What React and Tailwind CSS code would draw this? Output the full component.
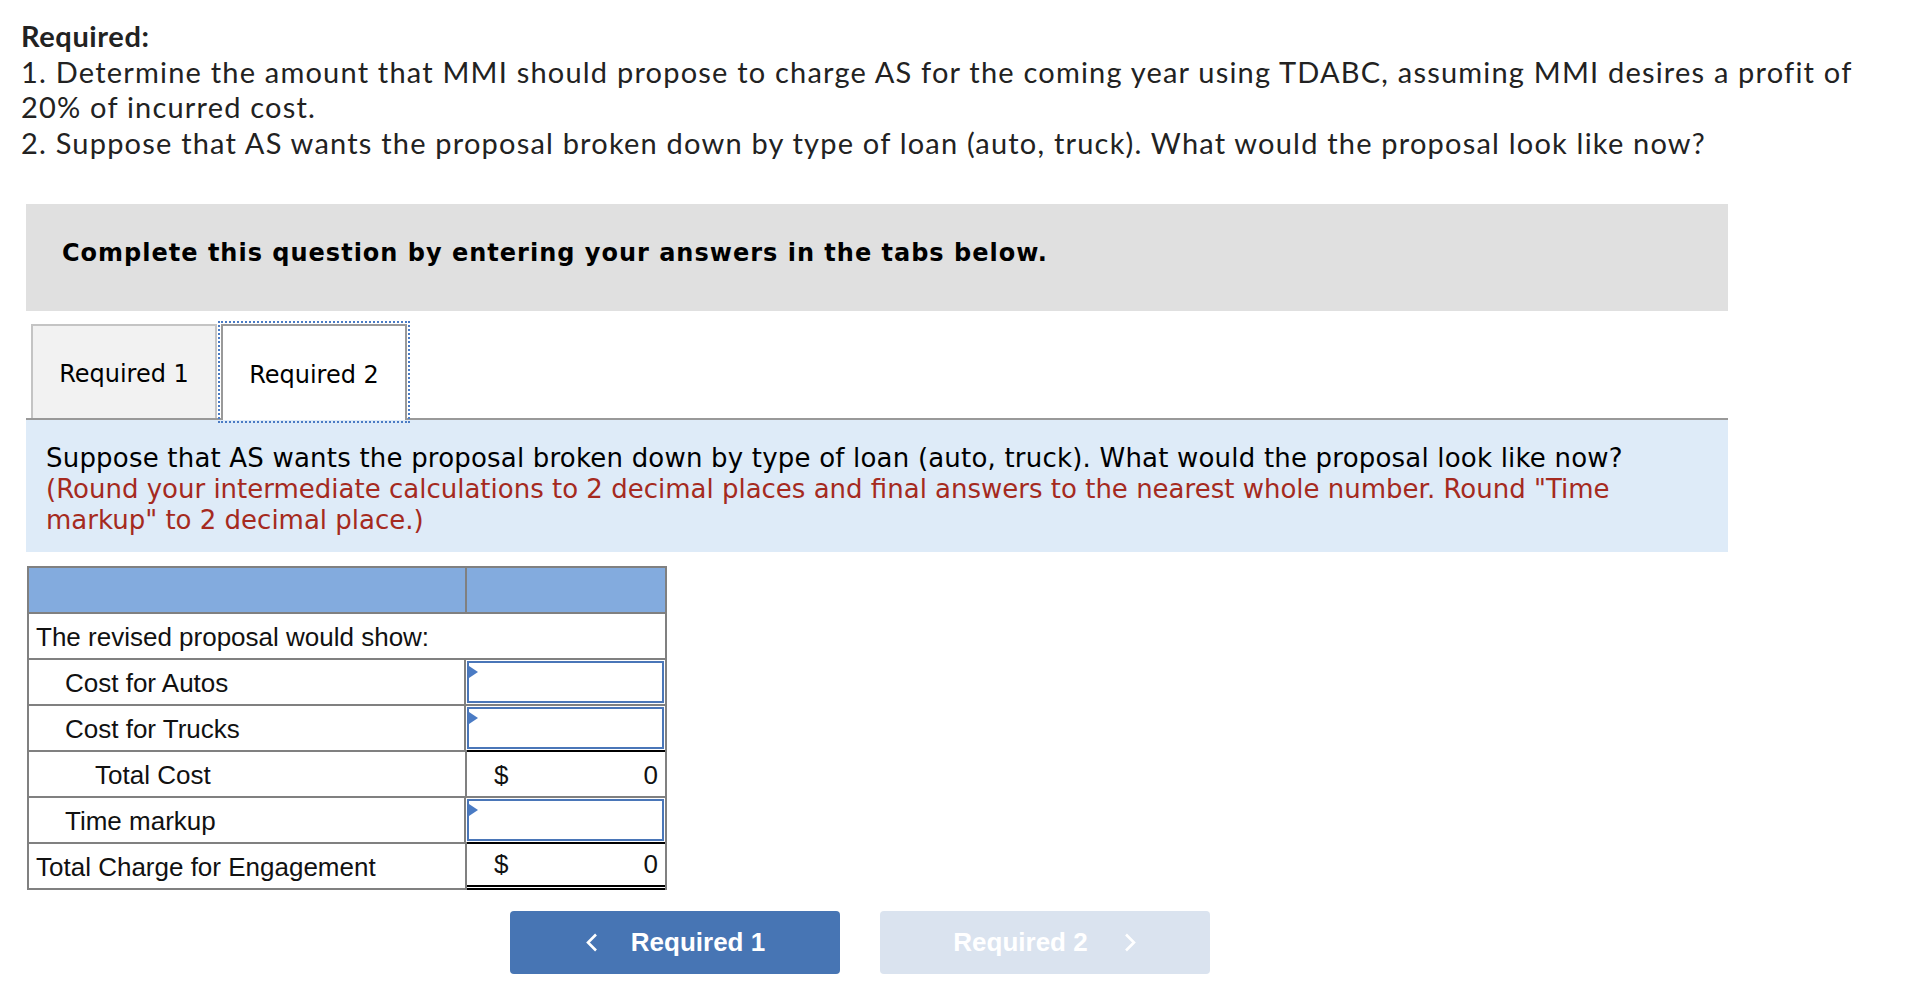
import React from "react";

function Tri() {
  return (
    <svg className="absolute left-0 top-[3px]" width="9" height="12" viewBox="0 0 9 12">
      <polygon points="0,0 9,6 0,12" fill="#4a7bc4" />
    </svg>
  );
}

function InputCell() {
  return (
    <div className="relative w-[200px] h-full p-px">
      <div className="relative w-full h-full border-2 border-[#4a76b8] bg-white">
        <Tri />
      </div>
    </div>
  );
}

function Chevron({ dir }) {
  return (
    <svg width="13" height="19" viewBox="0 0 13 19" fill="none">
      {dir === "left" ? (
        <polyline points="11,1.5 3,9.5 11,17.5" stroke="white" strokeWidth="2.6" />
      ) : (
        <polyline points="2,1.5 10,9.5 2,17.5" stroke="white" strokeWidth="2.6" />
      )}
    </svg>
  );
}

export default function App() {
  const arial = { fontFamily: '"Liberation Sans", Arial, sans-serif' };
  const verdana = { fontFamily: '"DejaVu Sans", Verdana, sans-serif' };
  return (
    <div className="w-[1918px] min-h-[998px] bg-white">
      {/* Intro text */}
      <div
        className="pl-[21px] pt-[18px] text-[29px] tracking-[1.2px] leading-[35.5px] text-[#222]"
        style={{ fontFamily: 'Lato, "Open Sans", sans-serif' }}
      >
        <div className="font-bold tracking-[0.6px]">Required:</div>
        <div className="whitespace-nowrap">
          1. Determine the amount that MMI should propose to charge AS for the coming year using TDABC, assuming MMI desires a profit of
        </div>
        <div>20% of incurred cost.</div>
        <div className="whitespace-nowrap">
          2. Suppose that AS wants the proposal broken down by type of loan (auto, truck). What would the proposal look like now?
        </div>
      </div>

      {/* Instruction box */}
      <div className="ml-[26px] mt-[44px] w-[1702px] h-[107px] bg-[#e0e0e0] pl-[36px] pt-[31px]" style={verdana}>
        <div className="text-[24px] tracking-[1px] font-bold text-black">
          Complete this question by entering your answers in the tabs below.
        </div>
      </div>

      {/* Tabs */}
      <div className="ml-[26px] mt-[15px] w-[1702px] h-[94px] border-b-2 border-[#999] flex items-end pl-[5px]" style={verdana}>
        <div className="h-[94px] w-[186px] bg-[#f2f2f2] border-2 border-b-0 border-[#c4c4c4] flex items-center justify-center pt-1 text-[24px] text-black">
          Required 1
        </div>
        <div className="ml-[4px] h-[96px] -mb-[2px] w-[186px] bg-white border-2 border-b-0 border-[#999] flex items-center justify-center pt-1 text-[24px] text-black outline-2 outline-dotted outline-[#4a7bc4] outline-offset-[1px]">
          Required 2
        </div>
      </div>

      {/* Question box */}
      <div className="ml-[26px] w-[1702px] h-[132px] bg-[#deebf8] pl-[20px] pt-[23px] text-[26px] leading-[31px]" style={verdana}>
        <div className="text-black whitespace-nowrap tracking-[0.2px]">
          Suppose that AS wants the proposal broken down by type of loan (auto, truck). What would the proposal look like now?
        </div>
        <div className="text-[#a52a20]">
          (Round your intermediate calculations to 2 decimal places and final answers to the nearest whole number. Round "Time
          <br />
          markup" to 2 decimal place.)
        </div>
      </div>

      {/* Table */}
      <div className="ml-[27px] mt-[14px] w-[640px] border-2 border-b-0 border-[#808080] text-[26px] text-[#111]" style={arial}>
        <div className="flex h-[46px] border-b-2 border-[#808080] bg-[#83abde]">
          <div className="w-[438px] border-r-2 border-[#808080]" />
          <div className="flex-1" />
        </div>
        <div className="flex h-[46px] border-b-2 border-[#808080] items-center pl-[7px] pt-[2px]">
          The revised proposal would show:
        </div>
        <div className="flex h-[46px] border-b-2 border-[#808080]">
          <div className="w-[438px] border-r-2 border-[#808080] flex items-center pl-[36px] pt-[2px]">Cost for Autos</div>
          <InputCell />
        </div>
        <div className="flex h-[46px] border-b-2 border-[#808080]">
          <div className="w-[438px] border-r-2 border-[#808080] flex items-center pl-[36px] pt-[2px]">Cost for Trucks</div>
          <InputCell />
        </div>
        <div className="flex h-[46px] border-b-2 border-[#808080] relative">
          <div className="w-[438px] border-r-2 border-[#808080] flex items-center pl-[66px] pt-[2px]">Total Cost</div>
          <div className="flex-1 flex items-center justify-between pl-[27px] pr-[7px] pt-[2px] border-t-2 border-black -mt-[2px]">
            <span>$</span>
            <span>0</span>
          </div>
        </div>
        <div className="flex h-[46px] border-b-2 border-[#808080]">
          <div className="w-[438px] border-r-2 border-[#808080] flex items-center pl-[36px] pt-[2px]">Time markup</div>
          <InputCell />
        </div>
        <div className="flex h-[46px]">
          <div className="w-[438px] border-r-2 border-b-2 border-[#808080] flex items-center pl-[7px] pt-[2px]">Total Charge for Engagement</div>
          <div className="flex-1 flex items-center justify-between pl-[27px] pr-[7px] border-t-2 border-black border-b-[5px] border-b-black border-double -mt-[2px] h-[48px]" style={{ borderTopStyle: "solid" }}>
            <span>$</span>
            <span>0</span>
          </div>
        </div>
      </div>

      {/* Buttons */}
      <div className="ml-[510px] mt-[21px] flex gap-[40px]" style={arial}>
        <div className="w-[330px] h-[63px] rounded-[4px] bg-[#4775b4] flex items-center justify-center gap-[33px] text-white text-[26px] font-bold">
          <Chevron dir="left" />
          <span>Required 1</span>
        </div>
        <div className="w-[330px] h-[63px] rounded-[4px] bg-[#dae3ef] flex items-center justify-center gap-[36px] text-white text-[26px] font-bold">
          <span>Required 2</span>
          <Chevron dir="right" />
        </div>
      </div>
    </div>
  );
}
